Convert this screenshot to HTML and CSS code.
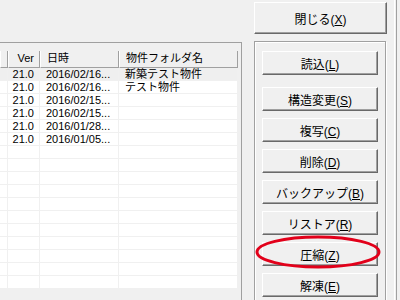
FILE: index.html
```html
<!DOCTYPE html>
<html lang="ja">
<head>
    <meta charset="UTF-8">
    <title>物件一覧</title>
    <link rel="stylesheet" href="styles.css">
</head>
<body>
    <div class="window">
        <!-- 物件リスト -->
        <div class="list-pane">
            <div class="list">
                <div class="list-header">
                    <div class="c0"></div>
                    <div class="c1">Ver</div>
                    <div class="c2">日時</div>
                    <div class="c3">物件フォルダ名</div>
                </div>
                <div class="list-row selected">
                    <div class="c0"></div><div class="c1">21.0</div><div class="c2">2016/02/16...</div><div class="c3">新築テスト物件</div>
                </div>
                <div class="list-row">
                    <div class="c0"></div><div class="c1">21.0</div><div class="c2">2016/02/16...</div><div class="c3">テスト物件</div>
                </div>
                <div class="list-row">
                    <div class="c0"></div><div class="c1">21.0</div><div class="c2">2016/02/15...</div><div class="c3"></div>
                </div>
                <div class="list-row">
                    <div class="c0"></div><div class="c1">21.0</div><div class="c2">2016/02/15...</div><div class="c3"></div>
                </div>
                <div class="list-row">
                    <div class="c0"></div><div class="c1">21.0</div><div class="c2">2016/01/28...</div><div class="c3"></div>
                </div>
                <div class="list-row">
                    <div class="c0"></div><div class="c1">21.0</div><div class="c2">2016/01/05...</div><div class="c3"></div>
                </div>
                <div class="list-row"><div class="c0"></div><div class="c1"></div><div class="c2"></div><div class="c3"></div></div>
                <div class="list-row"><div class="c0"></div><div class="c1"></div><div class="c2"></div><div class="c3"></div></div>
                <div class="list-row"><div class="c0"></div><div class="c1"></div><div class="c2"></div><div class="c3"></div></div>
                <div class="list-row"><div class="c0"></div><div class="c1"></div><div class="c2"></div><div class="c3"></div></div>
                <div class="list-row"><div class="c0"></div><div class="c1"></div><div class="c2"></div><div class="c3"></div></div>
                <div class="list-row"><div class="c0"></div><div class="c1"></div><div class="c2"></div><div class="c3"></div></div>
                <div class="list-row"><div class="c0"></div><div class="c1"></div><div class="c2"></div><div class="c3"></div></div>
                <div class="list-row"><div class="c0"></div><div class="c1"></div><div class="c2"></div><div class="c3"></div></div>
                <div class="list-row"><div class="c0"></div><div class="c1"></div><div class="c2"></div><div class="c3"></div></div>
                <div class="list-row"><div class="c0"></div><div class="c1"></div><div class="c2"></div><div class="c3"></div></div>
                <div class="list-row"><div class="c0"></div><div class="c1"></div><div class="c2"></div><div class="c3"></div></div>
            </div>
        </div>

        <!-- ボタン -->
        <div class="side">
            <button class="button close">閉じる(<u>X</u>)</button>
            <div class="group">
                <button class="button first">読込(<u>L</u>)</button>
                <button class="button">構造変更(<u>S</u>)</button>
                <button class="button">複写(<u>C</u>)</button>
                <button class="button">削除(<u>D</u>)</button>
                <button class="button">バックアップ(<u>B</u>)</button>
                <button class="button">リストア(<u>R</u>)</button>
                <button class="button">圧縮(<u>Z</u>)</button>
                <button class="button">解凍(<u>E</u>)</button>
            </div>
        </div>
        <div class="divider"></div>
    </div>

    <!-- 赤い丸印 -->
    <svg class="mark" width="130" height="36" viewBox="0 0 130 36">
        <ellipse cx="64" cy="17" rx="61" ry="15" fill="none" stroke="#e2001a" stroke-width="3"/>
    </svg>
</body>
</html>
```

FILE: styles.css
```css
body {
    margin: 0;
    width: 400px;
    height: 300px;
    overflow: hidden;
    background-color: #f0f0f0;
    font-family: "Liberation Sans", "Noto Sans CJK JP", sans-serif;
    font-size: 11px;
    color: #000;
    position: relative;
}
.window {
    display: flex;
    height: 300px;
}

/* Lista */
.list-pane {
    width: 242px;
    margin-top: 42px;
    padding: 8px 3px 0 0;
    box-sizing: border-box;
    border-top: 1px solid #a0a0a0;
    border-right: 1px solid #a0a0a0;
    overflow: hidden;
}
.list {
    width: 238px;
    background-color: #fff;
}
.list-header, .list-row {
    display: flex;
}
.list-header div, .list-row div {
    box-sizing: border-box;
    white-space: nowrap;
    overflow: hidden;
}
.c0 { width: 8px; }
.c1 { width: 32px; text-align: right; }
.c2 { width: 79px; }
.c3 { width: 119px; }

.list-header {
    height: 17px;
    background-color: #f0f0f0;
}
.list-header div {
    height: 17px;
    line-height: 15px;
    border-left: 1px solid #fff;
    border-right: 1px solid #a0a0a0;
    border-bottom: 1px solid #a0a0a0;
}
.list-header .c1 { padding-right: 5px; }
.list-header .c2, .list-header .c3 { padding-left: 6px; }

.list-row div {
    height: 13px;
    line-height: 12px;
    border-right: 1px solid #f0f0f0;
    border-bottom: 1px solid #f0f0f0;
}
.list-row .c1 { padding-right: 5px; }
.list-row .c2 { padding-left: 6px; }
.list-row .c3 { padding-left: 6px; }
.list-row.selected div {
    background-color: #efefef;
}

/* Botones */
.side {
    width: 152px;
    padding: 2px 0 0 12px;
    box-sizing: border-box;
}
.button {
    display: block;
    box-sizing: border-box;
    padding: 0;
    background-color: #f0f0f0;
    border: 1px solid;
    border-color: #fff #696969 #696969 #fff;
    box-shadow: inset -1px -1px 0 #a0a0a0;
    font-family: "Liberation Sans", "Noto Sans CJK JP", sans-serif;
    font-size: 12px;
    color: #000;
}
.close {
    width: 133px;
    height: 32px;
}
.group {
    width: 132px;
    height: 270px;
    margin-top: 7px;
    box-sizing: border-box;
    padding: 9px 0 0 7px;
    border: 1px solid #a0a0a0;
    box-shadow: inset 1px 1px 0 #fff, 1px 1px 0 #fff;
    display: flex;
    flex-direction: column;
    gap: 7px;
}
.group .button {
    width: 116px;
    height: 24px;
}
.group .first {
    margin-bottom: 5px;
}
.divider {
    width: 1px;
    border-left: 1px solid #fff;
    border-right: 1px solid #a0a0a0;
}

/* Marca roja sobre el botón */
.mark {
    position: absolute;
    left: 254px;
    top: 235px;
}
```
